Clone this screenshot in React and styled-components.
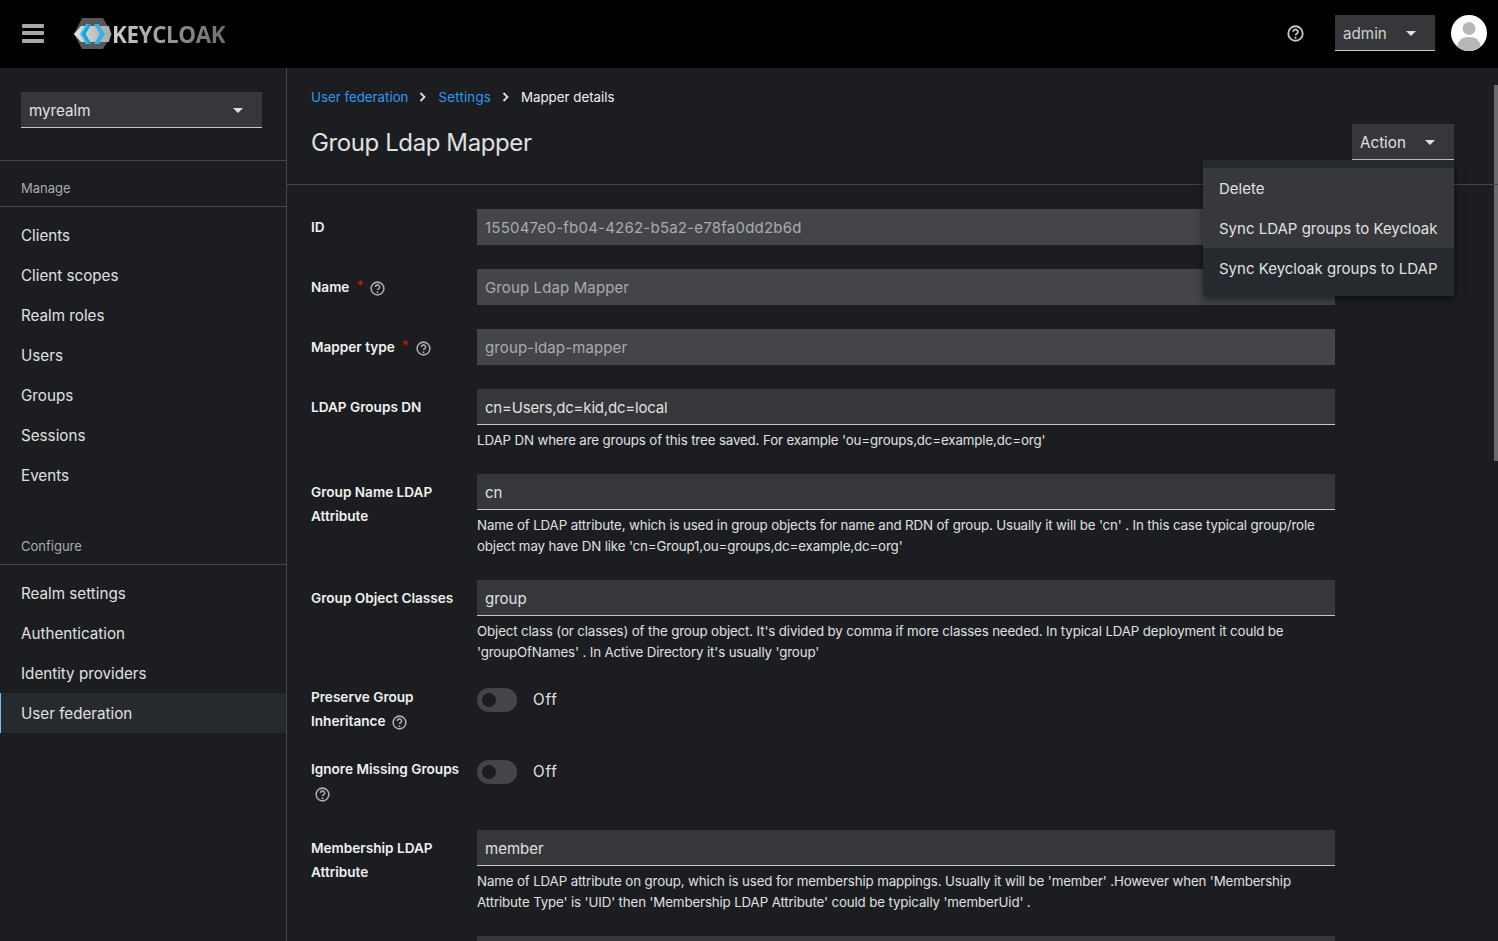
import React from "react";
import styled, { createGlobalStyle } from "styled-components";

const Global = createGlobalStyle`
  html, body { margin: 0; padding: 0; height: 100%; overflow: hidden; background: #1b1d21; }
  * { box-sizing: border-box; }
  body { font-family: Inter, "Noto Sans", sans-serif; color: #e0e0e0; font-size: 16px; }
`;
const Page = styled.div`width: 1498px; height: 941px; display: flex; flex-direction: column; overflow: hidden;`;
const Header = styled.header`height: 68px; flex: none; background: #000; display: flex; align-items: center; padding: 0 11px 2px 22px;`;
const Burger = styled.div`width: 22px; display: flex; flex-direction: column; gap: 3.500px; margin-right: 30px; span { height: 4px; background: #a8a8a8; border-radius: 1px; }`;
const Logo = styled.div`display: flex; align-items: center; margin-top: 2px;`;
const LogoText = styled.span`
  font-family: "Open Sans", sans-serif; font-weight: 700; font-size: 22.400px; letter-spacing: -0.400px;
  background: linear-gradient(90deg, #d0d0d0, #8a8a8a 60%, #6f6f6f); -webkit-background-clip: text; background-clip: text; color: transparent;
`;
const Spacer = styled.div`flex: 1;`;
const HelpBig = styled.div`margin-right: 31px; display: flex;`;
const Drop = styled.div`
  display: flex; align-items: center; justify-content: space-between; height: 36px; background: #36373a;
  border-bottom: 1px solid #c7c7c7; padding: 1px 19px 0 8px; font-size: 15.200px; color: ${p => p.$color || "#e0e0e0"}; width: ${p => p.$w}px; flex: none;
`;
const Caret = styled.i`width: 0; height: 0; border-left: 5px solid transparent; border-right: 5px solid transparent; border-top: 5px solid #e0e0e0; display: block;`;
const Avatar = styled.div`margin-left: 16px; display: flex;`;
const Body = styled.div`flex: 1; display: flex; min-height: 0;`;
const Side = styled.nav`width: 287px; flex: none; border-right: 1px solid #444548; display: flex; flex-direction: column;`;
const RealmWrap = styled.div`padding: 24px 24px 32px 21px; border-bottom: 1px solid #444548;`;
const Group = styled.div`
  font-size: 13px; line-height: 21px; color: #aaabac; padding: 17px 0 7px 21px;
  border-bottom: 1px solid #444548; margin-top: ${p => p.$top || 0}px; margin-bottom: 8px;
`;
const Item = styled.div`
  height: 40px; display: flex; align-items: center; font-size: 15.200px; padding-left: ${p => p.$active ? 20 : 21}px; color: #e0e0e0;
  background: ${p => p.$active ? "#26292d" : "transparent"}; border-left: ${p => p.$active ? "1px solid #73bcf7" : "none"};
`;
const Main = styled.main`flex: 1; position: relative; min-width: 0;`;
const Scroll = styled.div`position: absolute; right: 0; top: 17px; width: 4px; height: 376px; background: #6a6a6a;`;
const Top = styled.div`height: 117px; border-bottom: 1px solid #444548; padding: 18px 44px 0 24px; position: relative;`;
const Crumbs = styled.div`display: flex; align-items: center; font-size: 13.300px; height: 21px;`;
const Crumb = styled.span`color: ${p => p.$link ? "#2b9af3" : "#f0f0f0"}; letter-spacing: ${p => p.$ls || 0}px;`;
const Chevron = styled.span`display: flex; margin: 0 12px 0 11px;`;
const TitleRow = styled.div`display: flex; justify-content: space-between; align-items: center; margin-top: 17px;`;
const Title = styled.h1`margin: 0; font-weight: 400; font-size: 24px; letter-spacing: -0.400px; color: #e0e0e0;`;
const Menu = styled.div`position: absolute; right: 44px; top: 92px; width: 251px; background: #26292d; padding: 8px 0; box-shadow: 0 4px 8px rgba(0,0,0,.5); z-index: 3;`;
const MenuItem = styled.div`height: 40px; display: flex; align-items: center; padding-left: 16px; font-size: 15px; white-space: nowrap; background: ${p => p.$hi ? "#36383c" : "transparent"};`;
const Form = styled.div`padding: 24px 24px 0; width: 1072px; display: flex; flex-direction: column; gap: 24px;`;
const Row = styled.div`display: grid; grid-template-columns: 150px 1fr; column-gap: 16px;`;
const Label = styled.div`font-size: 13.600px; font-weight: 600; line-height: 24px; padding-top: ${p => p.$flush ? 0 : 6}px; margin: ${p => p.$flush ? "-1px 0 1px" : 0}; color: #f0f0f0;`;
const Req = styled.span`color: #c9190b; margin-left: 7px; font-size: 14px; line-height: 0; vertical-align: 1px; font-weight: 400;`;
const Tip = styled.span`display: inline-flex; margin-left: ${p => p.$m ?? 7}px; line-height: 0; vertical-align: -4px;`;
const Input = styled.div`
  height: 36px; display: flex; align-items: center; padding: ${p => p.$ro ? "0 8px" : "1px 8px 0"}; font-size: 15px;
  letter-spacing: ${p => p.$ls || 0}px;
  background: ${p => p.$ro ? "#444548" : "#36373a"}; color: ${p => p.$ro ? "#aaabac" : "#e0e0e0"};
  border-bottom: ${p => p.$ro ? "none" : "1px solid #c7c7c7"};
`;
const Help = styled.div`font-size: 13.300px; line-height: 21px; margin: 5px 0 -1px; letter-spacing: -0.130px; color: #e0e0e0;`;
const SwitchRow = styled.div`display: flex; align-items: center; gap: 16px; margin-top: 2px; font-size: 15.200px; height: 24px; letter-spacing: 0.800px; line-height: 22px;`;
const OffText = styled.span`margin-top: -1px;`;
const Track = styled.div`width: 40px; height: 24px; border-radius: 12px; background: #444548; display: flex; align-items: center; padding-left: 5px;`;
const Knob = styled.div`width: 14px; height: 14px; border-radius: 50%; background: #1b1d21;`;

const Q = ({ s = 16, c = "#aaabac" }) => (
  <svg width={s} height={s} viewBox="0 0 16 16" fill="none">
    <circle cx="8" cy="8" r="6.800" stroke={c} strokeWidth="1.700" />
    <path d="M5.800 6.400a2.200 2.200 0 1 1 3.400 1.800c-.8.400-1.200.8-1.200 1.500" stroke={c} strokeWidth="1.700" />
    <circle cx="8" cy="11.900" r="1" fill={c} />
  </svg>
);
const KeycloakMark = () => (
  <svg width="38" height="32" viewBox="0 0 38 32" style={{ flex: "none" }}>
    <defs>
      <linearGradient id="band" x1="0" x2="1" y1="0" y2="0">
        <stop offset="0" stopColor="#e4e4e4" />
        <stop offset="1" stopColor="#a8a8a8" />
      </linearGradient>
    </defs>
    <path d="M8 0h21l9 16-9 15H8L0 16z" fill="#575757" />
    <path d="M7 8h28l2 8-2 8H7l-7-8z" fill="url(#band)" />
    <path d="M12 6h5l-6 10 6 10h-5L6 16z" fill="#33c3f0" />
    <path d="M14.500 6h3l-6 10 6 10h-3l-6-10z" fill="#1f9ad6" />
    <path d="M25 6h-5l6 10-6 10h5l6-10z" fill="#33b4e8" />
  </svg>
);
const Field = ({ label, value, ro, req, tip, help, ls }) => (
  <Row>
    <Label>{label}{req && <Req>*</Req>}{tip && <Tip><Q s={15} /></Tip>}</Label>
    <div>
      <Input $ro={ro} $ls={ls}>{value}</Input>
      {help && <Help>{help}</Help>}
    </div>
  </Row>
);
const Toggle = ({ label }) => (
  <Row>
    <Label $flush>{label}</Label>
    <SwitchRow><Track><Knob /></Track><OffText>Off</OffText></SwitchRow>
  </Row>
);
const Sep = () => (
  <Chevron><svg width="7" height="10" viewBox="0 0 7 10"><path d="M1.500 1l4 4-4 4" fill="none" stroke="#e0e0e0" strokeWidth="1.800" /></svg></Chevron>
);

export default function App() {
  return (
    <Page>
      <Global />
      <Header>
        <Burger><span /><span /><span /></Burger>
        <Logo><KeycloakMark /><LogoText>KEYCLOAK</LogoText></Logo>
        <Spacer />
        <HelpBig><Q s={17} c="#c8c8c8" /></HelpBig>
        <Drop $w={100} $color="#d0d0d0">admin<Caret /></Drop>
        <Avatar>
          <svg width="36" height="36" viewBox="0 0 36 36">
            <defs><clipPath id="av"><circle cx="18" cy="18" r="18" /></clipPath></defs>
            <circle cx="18" cy="18" r="18" fill="#fff" />
            <g clipPath="url(#av)" fill="#b8b8b8">
              <circle cx="18" cy="13.500" r="6.500" />
              <path d="M6 36c0-9 3-14 12-14s12 5 12 14z" />
            </g>
          </svg>
        </Avatar>
      </Header>
      <Body>
        <Side>
          <RealmWrap><Drop $w={241}>myrealm<Caret /></Drop></RealmWrap>
          <Group>Manage</Group>
          {["Clients", "Client scopes", "Realm roles", "Users", "Groups", "Sessions", "Events"].map(t => <Item key={t}>{t}</Item>)}
          <Group $top={24}>Configure</Group>
          {["Realm settings", "Authentication", "Identity providers"].map(t => <Item key={t}>{t}</Item>)}
          <Item $active>User federation</Item>
        </Side>
        <Main>
          <Scroll />
          <Top>
            <Crumbs>
              <Crumb $link>User federation</Crumb>
              <Sep />
              <Crumb $link $ls={0.2}>Settings</Crumb>
              <Sep />
              <Crumb>Mapper details</Crumb>
            </Crumbs>
            <TitleRow>
              <Title>Group Ldap Mapper</Title>
              <Drop $w={102}>Action<Caret /></Drop>
            </TitleRow>
            <Menu>
              <MenuItem $hi>Delete</MenuItem>
              <MenuItem $hi>Sync LDAP groups to Keycloak</MenuItem>
              <MenuItem>Sync Keycloak groups to LDAP</MenuItem>
            </Menu>
          </Top>
          <Form>
            <Field label="ID" value="155047e0-fb04-4262-b5a2-e78fa0dd2b6d" ro ls={0.22} />
            <Field label="Name" value="Group Ldap Mapper" ro req tip ls={0.12} />
            <Field label="Mapper type" value="group-ldap-mapper" ro req tip ls={0.12} />
            <Field label="LDAP Groups DN" value="cn=Users,dc=kid,dc=local" ls={-0.2} help="LDAP DN where are groups of this tree saved. For example 'ou=groups,dc=example,dc=org'" />
            <Field label="Group Name LDAP Attribute" value="cn" help="Name of LDAP attribute, which is used in group objects for name and RDN of group. Usually it will be 'cn' . In this case typical group/role object may have DN like 'cn=Group1,ou=groups,dc=example,dc=org'" />
            <Field label="Group Object Classes" value="group" help="Object class (or classes) of the group object. It's divided by comma if more classes needed. In typical LDAP deployment it could be 'groupOfNames' . In Active Directory it's usually 'group'" />
            <Toggle label={<>Preserve Group Inheritance<Tip><Q s={15} /></Tip></>} />
            <Toggle label={<>Ignore Missing Groups <Tip $m={4}><Q s={15} /></Tip></>} />
            <Field label="Membership LDAP Attribute" value="member" help="Name of LDAP attribute on group, which is used for membership mappings. Usually it will be 'member' .However when 'Membership Attribute Type' is 'UID' then 'Membership LDAP Attribute' could be typically 'memberUid' ." />
            <Field label="" value="" />
          </Form>
        </Main>
      </Body>
    </Page>
  );
}
